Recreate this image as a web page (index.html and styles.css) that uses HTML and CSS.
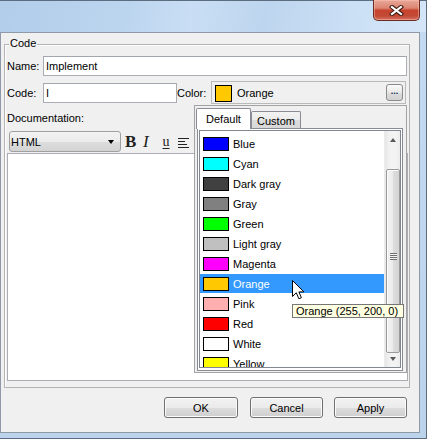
FILE: index.html
```html
<!DOCTYPE html>
<html>
<head>
<meta charset="utf-8">
<link rel="stylesheet" href="styles.css">
</head>
<body>
<div class="window">
  <div class="titlebar">
    <div class="close">
      <svg width="15" height="11" viewBox="0 0 15 11">
        <path d="M3 2 L12 9 M12 2 L3 9" stroke="#3d1a14" stroke-width="4.2" stroke-linecap="square" fill="none"/>
        <path d="M3 2 L12 9 M12 2 L3 9" stroke="#ffffff" stroke-width="2.2" stroke-linecap="square" fill="none"/>
      </svg>
    </div>
  </div>
  <div class="client">
    <div class="group">
      <span class="legend">Code</span>
      <div class="row row-name">
        <span class="lbl">Name:</span>
        <div class="field name-field">Implement</div>
      </div>
      <div class="row row-code">
        <span class="lbl">Code:</span>
        <div class="field code-field">I</div>
        <span class="lbl color-lbl">Color:</span>
        <div class="color-box">
          <span class="cswatch"></span>
          <span class="ctext">Orange</span>
          <span class="dots">...</span>
        </div>
      </div>
      <div class="doc-label">Documentation:</div>
      <div class="toolbar">
        <div class="combo"><span>HTML</span><span class="caret"></span></div>
        <span class="tb tb-b">B</span>
        <span class="tb tb-i">I</span>
        <span class="tb tb-u">u</span>
        <svg class="tb tb-align" width="12" height="11" viewBox="0 0 12 11">
          <path d="M0 1.5 H11 M0 4.5 H7 M0 7.5 H9 M0 10.5 H11" stroke="#222" stroke-width="1"/>
        </svg>
      </div>
      <div class="textarea"></div>
    </div>
    <div class="buttons">
      <div class="btn btn-ok">OK</div>
      <div class="btn btn-cancel">Cancel</div>
      <div class="btn btn-apply">Apply</div>
    </div>
  </div>

  <div class="popup">
    <div class="tabs">
      <div class="tab tab-active">Default</div>
      <div class="tab tab-idle">Custom</div>
    </div>
    <div class="panel">
      <div class="list">
        <div class="items">
          <div class="item"><span class="sw" style="background:#0000ff"></span><span>Blue</span></div>
          <div class="item"><span class="sw" style="background:#00ffff"></span><span>Cyan</span></div>
          <div class="item"><span class="sw" style="background:#404040"></span><span>Dark gray</span></div>
          <div class="item"><span class="sw" style="background:#808080"></span><span>Gray</span></div>
          <div class="item"><span class="sw" style="background:#00ff00"></span><span>Green</span></div>
          <div class="item"><span class="sw" style="background:#c0c0c0"></span><span>Light gray</span></div>
          <div class="item"><span class="sw" style="background:#ff00ff"></span><span>Magenta</span></div>
          <div class="item selected"><span class="sw" style="background:#ffc800"></span><span>Orange</span></div>
          <div class="item"><span class="sw" style="background:#ffafaf"></span><span>Pink</span></div>
          <div class="item"><span class="sw" style="background:#ff0000"></span><span>Red</span></div>
          <div class="item"><span class="sw" style="background:#ffffff"></span><span>White</span></div>
          <div class="item"><span class="sw" style="background:#ffff00"></span><span>Yellow</span></div>
        </div>
        <div class="scrollbar">
          <div class="sb-up"><span class="tri-up"></span></div>
          <div class="thumb"><span class="grip"></span></div>
          <div class="sb-down"><span class="tri-down"></span></div>
        </div>
      </div>
    </div>
  </div>

  <div class="tooltip">Orange (255, 200, 0)</div>

  <svg class="cursor" width="14" height="21" viewBox="0 0 14 21">
    <path d="M0.5 0.5 L0.5 16.5 L4.3 12.8 L6.9 18.8 L9.4 17.7 L6.9 11.9 L11.9 11.9 Z" fill="#ffffff" stroke="#000000" stroke-width="1" stroke-linejoin="miter"/>
  </svg>
</div>
</body>
</html>
```

FILE: styles.css
```css
* {
  box-sizing: border-box;
}

html, body {
  margin: 0;
  padding: 0;
}

body {
  width: 427px;
  height: 439px;
  overflow: hidden;
  font-family: "Liberation Sans", Arial, sans-serif;
  font-size: 11px;
  color: #000;
  background: #ffffff;
}

.window {
  position: relative;
  width: 427px;
  height: 439px;
  background: linear-gradient(to bottom, #c4daf1, #bcd3ec);
  border-top: 1px solid #5d6d80;
  border-right: 1px solid #5d6d80;
  border-bottom: 1px solid #5d6d80;
  display: flex;
  flex-direction: column;
}

.titlebar {
  height: 31px;
  flex: none;
  display: flex;
  justify-content: flex-end;
  background: linear-gradient(100deg, #b2cdea 0%, #bcd5ef 30%, #c9def4 45%, #bdd5ee 62%, #cde1f6 85%, #d4e5f7 100%);
}

.close {
  width: 47px;
  height: 21px;
  margin-top: -1px;
  margin-right: 6px;
  border: 1px solid #6b2b22;
  border-top: none;
  border-radius: 0 0 5px 5px;
  background: linear-gradient(to bottom, #e9a898 0%, #dc8572 40%, #c7432e 52%, #c24a36 80%, #d7735f 100%);
  box-shadow: inset 0 0 0 1px rgba(255, 200, 190, 0.45);
  display: flex;
  align-items: center;
  justify-content: center;
}

.client {
  width: 420px;
  height: 401px;
  flex: none;
  border: 1px solid #8e9aa8;
  background: #f0f0f0;
  display: flex;
  flex-direction: column;
}

.group {
  position: relative;
  height: 344px;
  margin: 11px 9px 0 3px;
  border: 1px solid #b4b4b4;
  box-shadow: inset 1px 1px 0 #ffffff;
  display: flex;
  flex-direction: column;
}

.legend {
  position: absolute;
  top: -8px;
  left: 4px;
  padding: 0 1px;
  line-height: 13px;
  background: #f0f0f0;
}

.row {
  display: flex;
  align-items: center;
  padding-left: 2px;
}

.row-name {
  margin-top: 11px;
  height: 20px;
}

.row-code {
  margin-top: 5px;
  height: 23px;
}

.lbl {
  width: 36px;
  flex: none;
}

.color-lbl {
  width: 34px;
}

.field {
  height: 20px;
  border: 1px solid #abadb3;
  border-top-color: #a2a6ad;
  background: #ffffff;
  padding-left: 2px;
  display: flex;
  align-items: center;
}

.name-field {
  width: 364px;
}

.code-field {
  width: 134px;
}

.color-box {
  width: 195px;
  height: 23px;
  border: 1px solid #b9b9b9;
  background: #f0f0f0;
  display: flex;
  align-items: center;
  padding-left: 3px;
  padding-right: 2px;
}

.cswatch {
  width: 17px;
  height: 17px;
  margin-top: 2px;
  border: 1px solid #000;
  background: #ffc800;
  flex: none;
}

.ctext {
  margin-left: 5px;
}

.dots {
  margin-left: auto;
  width: 17px;
  height: 17px;
  border: 1px solid #8a8a8a;
  border-radius: 3px;
  background: linear-gradient(to bottom, #fbfbfb, #e8e8e8 50%, #dcdcdc 51%, #d2d2d2);
  font-size: 9px;
  line-height: 13px;
  text-align: center;
  color: #1b2a55;
  letter-spacing: 0px;
  font-weight: bold;
}

.doc-label {
  height: 27px;
  padding-left: 2px;
  display: flex;
  align-items: center;
}

.toolbar {
  height: 21px;
  display: flex;
  align-items: center;
  padding-left: 4px;
}

.combo {
  width: 112px;
  height: 21px;
  border: 1px solid #a0a0a0;
  border-radius: 3px;
  background: linear-gradient(to bottom, #f3f3f3, #ebebeb 50%, #dddddd 51%, #d3d3d3);
  display: flex;
  align-items: center;
  padding-left: 1px;
  padding-right: 6px;
  justify-content: space-between;
  flex: none;
}

.caret {
  width: 0;
  height: 0;
  border-left: 3.5px solid transparent;
  border-right: 3.5px solid transparent;
  border-top: 4px solid #000;
}

.tb {
  flex: none;
  color: #222;
}

.tb-b {
  margin-left: 4px;
  width: 11px;
  font-family: "Liberation Serif", "Times New Roman", serif;
  font-weight: bold;
  font-size: 17px;
  line-height: 17px;
}

.tb-i {
  margin-left: 7px;
  width: 10px;
  font-family: "Liberation Serif", "Times New Roman", serif;
  font-style: italic;
  font-size: 17px;
  line-height: 17px;
}

.tb-u {
  margin-left: 8px;
  width: 10px;
  font-family: "Liberation Serif", "Times New Roman", serif;
  font-size: 14px;
  line-height: 14px;
  text-decoration: underline;
  text-underline-offset: 2px;
  text-align: center;
}

.tb-align {
  margin-left: 7px;
  margin-top: 1px;
}

.textarea {
  height: 228px;
  margin: 1px 1px 0 2px;
  border: 1px solid #abadb3;
  background: #ffffff;
}

.buttons {
  display: flex;
  justify-content: flex-end;
  margin-top: 9px;
  margin-right: 12px;
}

.btn {
  width: 73px;
  height: 21px;
  border: 1px solid #707070;
  border-radius: 3px;
  background: linear-gradient(to bottom, #f2f2f2, #ebebeb 50%, #dddddd 51%, #cfcfcf);
  box-shadow: inset 0 0 0 1px #fbfbfb;
  display: flex;
  align-items: center;
  justify-content: center;
}

.btn-ok {
  width: 74px;
}

.btn-cancel {
  margin-left: 12px;
}

.btn-apply {
  margin-left: 11px;
}

/* popup */
.popup {
  position: absolute;
  left: 194px;
  top: 104px;
  width: 213px;
  height: 268px;
  border: 1px solid #a3a3a3;
  background: #f0f0f0;
  display: flex;
  flex-direction: column;
}

.tabs {
  height: 22px;
  flex: none;
  padding-top: 2px;
  padding-left: 1px;
  display: flex;
  align-items: flex-end;
}

.tab {
  border: 1px solid #898c95;
  border-bottom: none;
  border-radius: 2px 2px 0 0;
  display: flex;
  align-items: center;
  justify-content: center;
}

.tab-active {
  position: relative;
  z-index: 2;
  width: 55px;
  height: 21px;
  margin-bottom: -1px;
  background: #ffffff;
  padding-bottom: 1px;
}

.tab-idle {
  width: 50px;
  height: 17px;
  padding-top: 1px;
  background: linear-gradient(to bottom, #f3f3f3, #ebebeb 50%, #dddddd 51%, #d8d8d8);
}

.panel {
  height: 243px;
  margin: 0 3px 1px 2px;
  border: 1px solid #898c95;
  background: #ffffff;
  padding: 1px 1px 2px 1px;
}

.list {
  height: 238px;
  border: 1px solid #828790;
  background: #ffffff;
  display: flex;
  overflow: hidden;
}

.items {
  width: 184px;
  flex: none;
  padding-top: 3px;
}

.item {
  height: 19px;
  margin-bottom: 1px;
  display: flex;
  align-items: center;
  padding-left: 3px;
}

.item.selected {
  background: #3399ff;
  color: #ffffff;
}

.sw {
  width: 26px;
  height: 14px;
  border: 1px solid #000;
  margin-right: 4px;
  flex: none;
}

.scrollbar {
  width: 16px;
  flex: none;
  display: flex;
  flex-direction: column;
  background: linear-gradient(to right, #e6e6e6, #f2f2f2 30%, #f4f4f4 70%, #ececec);
  border-left: 1px solid #ececec;
}

.sb-up {
  height: 20px;
  display: flex;
  justify-content: center;
  align-items: center;
  padding-bottom: 3px;
}

.tri-up {
  width: 0;
  height: 0;
  border-left: 3.5px solid transparent;
  border-right: 3.5px solid transparent;
  border-bottom: 4px solid #5a5a5a;
}

.thumb {
  height: 184px;
  margin-top: 18px;
  margin-left: 1px;
  margin-right: 0;
  border: 1px solid #9a9a9a;
  border-radius: 2px;
  background: linear-gradient(to right, #f3f3f3, #ececec 45%, #dcdcdc 55%, #d4d4d4);
  box-shadow: inset 1px 1px 0 #fcfcfc;
  display: flex;
  align-items: center;
  justify-content: center;
  padding-bottom: 10px;
}

.grip {
  width: 7px;
  height: 7px;
  background: repeating-linear-gradient(to bottom, #6e6e6e 0, #6e6e6e 1px, #f4f4f4 1px, #f4f4f4 2px);
}

.sb-down {
  flex: 1;
  display: flex;
  justify-content: center;
  align-items: flex-start;
  padding-top: 4px;
}

.tri-down {
  width: 0;
  height: 0;
  border-left: 3.5px solid transparent;
  border-right: 3.5px solid transparent;
  border-top: 4px solid #5a5a5a;
}

.tooltip {
  position: absolute;
  left: 292px;
  top: 303px;
  width: 112px;
  height: 14px;
  border: 1px solid #767676;
  background: #ffffe1;
  padding: 0 3px;
  line-height: 12px;
  white-space: nowrap;
  z-index: 5;
}

.cursor {
  position: absolute;
  left: 292px;
  top: 279px;
  z-index: 6;
}
```
